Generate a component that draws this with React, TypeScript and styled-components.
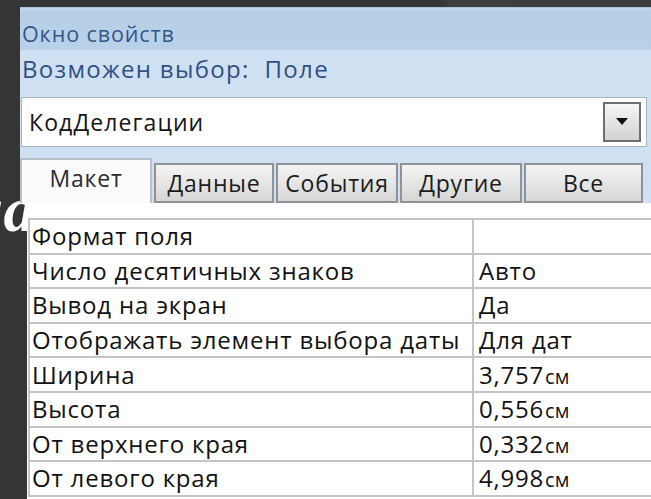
import styled, { createGlobalStyle } from "styled-components";

const GlobalStyle = createGlobalStyle`
  html, body {
    margin: 0;
    padding: 0;
    background: #363636;
  }
`;

const Slide = styled.div`
  background: linear-gradient(90deg, #353535 0%, #353535 68%, #3e3e3e 69%, #3d3d3d 100%);
  height: 499px;
  overflow: hidden;
  padding-top: 7px;
  position: relative;
  width: 651px;
  box-sizing: border-box;
`;

const SlideTitle = styled.div`
  color: #ffffff;
  font-family: "Liberation Serif", serif;
  font-size: 64px;
  font-style: italic;
  font-weight: 700;
  left: -32px;
  line-height: 1;
  position: absolute;
  top: 178px;
  z-index: 0;
`;

const Sheet = styled.div`
  margin-left: 20px;
  position: relative;
  z-index: 1;
`;

const Header = styled.div`
  background: #cfe0f2;
  font-family: "Open Sans", "Noto Sans", sans-serif;
`;

const TitleBar = styled.div`
  background: linear-gradient(180deg, #c6daef 0%, #b8cfe8 8%, #b9d0e9 100%);
  border-top: 1px solid #a9c2de;
  box-sizing: border-box;
  color: #34578a;
  font-size: 21.5px;
  height: 43px;
  letter-spacing: 0.9px;
  line-height: 40px;
  padding: 6px 0 0 2px;
`;

const Selection = styled.div`
  color: #2f5083;
  font-size: 24px;
  height: 40px;
  letter-spacing: 1.3px;
  line-height: 38px;
  padding-left: 2px;
  white-space: pre;
`;

const Combo = styled.div`
  align-items: center;
  background: #ffffff;
  border: 1px solid #aab5c2;
  box-sizing: border-box;
  display: flex;
  height: 50px;
  justify-content: space-between;
  margin: 7px 4px 0 1px;
  padding: 0 5px 0 7px;
`;

const ComboText = styled.span`
  color: #151515;
  font-size: 23px;
  letter-spacing: 1.1px;
`;

const ComboButton = styled.div`
  align-items: center;
  background: linear-gradient(180deg, #f6f6f6 0%, #e2e2e2 55%, #d2d2d2 100%);
  border: 2px solid #6f6f6f;
  box-sizing: border-box;
  display: flex;
  height: 40px;
  justify-content: center;
  width: 38px;
`;

const TabStrip = styled.div`
  align-items: flex-end;
  display: flex;
  gap: 2px;
  height: 56px;
`;

const Tab = styled.div<{ $active?: boolean; $width: number }>`
  align-items: center;
  background: ${({ $active }) =>
    $active ? "#fbfbfb" : "linear-gradient(180deg, #f4f4f4 0%, #e6e6e6 50%, #d6d6d6 100%)"};
  border: 2px solid ${({ $active }) => ($active ? "#b8bfc8" : "#8f9297")};
  border-bottom: ${({ $active }) => ($active ? "none" : "2px solid #8f9297")};
  box-sizing: border-box;
  color: ${({ $active }) => ($active ? "#2a2a33" : "#1c1c1c")};
  display: flex;
  font-size: 23px;
  height: ${({ $active }) => ($active ? "45px" : "40px")};
  justify-content: center;
  letter-spacing: 0.8px;
  padding-bottom: ${({ $active }) => ($active ? "8px" : "0")};
  width: ${({ $width }) => $width}px;
`;

const Body = styled.div`
  background: #ffffff;
  height: 300px;
  margin-left: 7px;
  padding-top: 15px;
`;

const Grid = styled.table`
  border-collapse: collapse;
  font-family: "Open Sans", "Noto Sans", sans-serif;
  margin-left: 1px;
  width: calc(100% + 20px);
`;

const Row = styled.tr`
  height: 34.6px;
`;

const Cell = styled.td<{ $value?: boolean }>`
  border: 2px solid #c4c4c4;
  box-sizing: border-box;
  color: #121212;
  font-size: 24px;
  letter-spacing: 0.8px;
  line-height: 1;
  padding: 0 0 0 ${({ $value }) => ($value ? "5px" : "2px")};
  white-space: nowrap;
  width: ${({ $value }) => ($value ? "auto" : "444px")};
`;

const Unit = styled.span`
  font-size: 20px;
  letter-spacing: 0;
  margin-left: 1px;
`;

const tabs = [
  { label: "Макет", width: 132 },
  { label: "Данные", width: 120 },
  { label: "События", width: 122 },
  { label: "Другие", width: 122 },
  { label: "Все", width: 119 },
];

const props: [string, string, string?][] = [
  ["Формат поля", ""],
  ["Число десятичных знаков", "Авто"],
  ["Вывод на экран", "Да"],
  ["Отображать элемент выбора даты", "Для дат"],
  ["Ширина", "3,757", "см"],
  ["Высота", "0,556", "см"],
  ["От верхнего края", "0,332", "см"],
  ["От левого края", "4,998", "см"],
];

export default function App() {
  return (
    <Slide>
      <GlobalStyle />
      <SlideTitle>ца</SlideTitle>
      <Sheet>
        <Header>
          <TitleBar>Окно свойств</TitleBar>
          <Selection>{"Возможен выбор:  Поле"}</Selection>
          <Combo>
            <ComboText>КодДелегации</ComboText>
            <ComboButton>
              <svg width="12" height="8" viewBox="0 0 12 8">
                <path d="M0 0h12L6 7z" fill="#111" />
              </svg>
            </ComboButton>
          </Combo>
          <TabStrip>
            {tabs.map((t, i) => (
              <Tab key={t.label} $active={i === 0} $width={t.width}>
                {t.label}
              </Tab>
            ))}
          </TabStrip>
        </Header>
        <Body>
          <Grid>
            <tbody>
              {props.map(([name, value, unit]) => (
                <Row key={name}>
                  <Cell>{name}</Cell>
                  <Cell $value>
                    {value}
                    {unit && <Unit>{unit}</Unit>}
                  </Cell>
                </Row>
              ))}
            </tbody>
          </Grid>
        </Body>
      </Sheet>
    </Slide>
  );
}
